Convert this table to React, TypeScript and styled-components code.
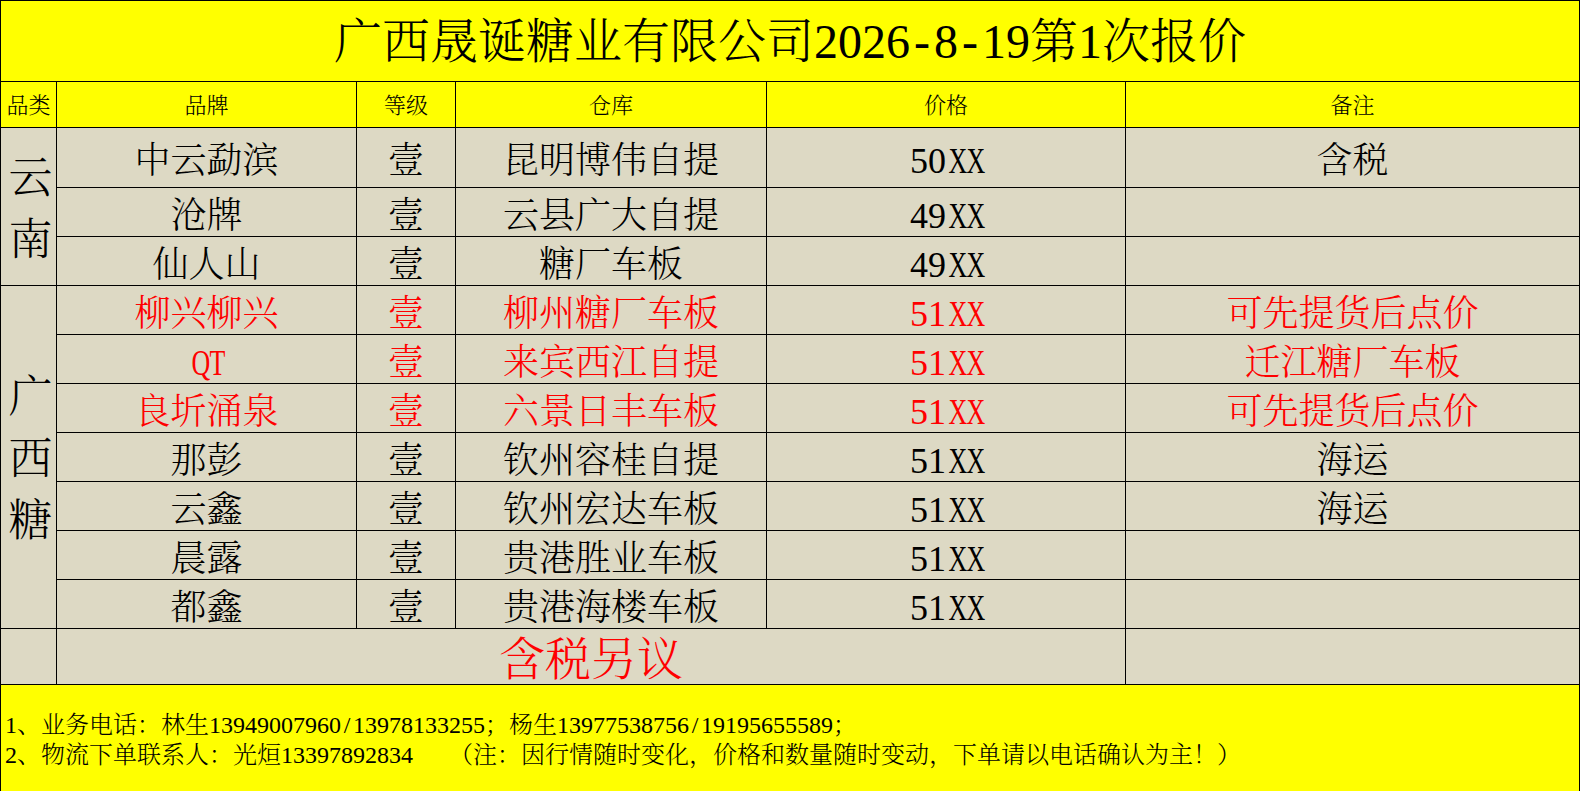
import React from "react";
import styled, { createGlobalStyle } from "styled-components";

const GlobalStyle = createGlobalStyle`
  html, body {
    margin: 0;
    padding: 0;
    background: #fff;
  }
  body {
    font-family: "Liberation Serif", "Noto Serif CJK SC", "Noto Sans CJK SC", serif;
    font-weight: 300;
  }
`;

const Sheet = styled.div`
  display: grid;
  width: 1580px;
  height: 791px;
  box-sizing: border-box;
  grid-template-columns: 55px 299px 98px 310px 358px 453px;
  grid-template-rows: 80px 45px 59px repeat(9, 48px) 55px 106px;
  gap: 1px;
  padding: 1px 1px 0;
  background: #000;
`;

const TitleBar = styled.div`
  grid-column: 1 / -1;
  display: flex;
  align-items: center;
  justify-content: center;
  padding-top: 2px;
  background: #ffff00;
  font-size: 48px;
  line-height: 1.2;
  color: #000;
  white-space: nowrap;
`;

const HeadCell = styled.div`
  display: flex;
  align-items: center;
  justify-content: center;
  padding-top: 4px;
  background: #ffff00;
  font-size: 22px;
  line-height: 1.2;
  color: #000;
`;

const Category = styled.div<{ $rows: number }>`
  grid-column: 1;
  grid-row: span ${(p) => p.$rows};
  display: flex;
  flex-direction: column;
  align-items: center;
  justify-content: center;
  padding-top: 6px;
  padding-left: 4px;
  background: #ddd9c4;
  font-size: 44px;
  line-height: 62px;
`;

const BodyCell = styled.div<{ $red?: boolean }>`
  display: flex;
  align-items: center;
  justify-content: center;
  padding-top: 9px;
  background: #ddd9c4;
  color: ${(p) => (p.$red ? "#ff0000" : "#000")};
  font-size: 36px;
  line-height: 1.2;
  white-space: nowrap;
`;

const TaxNote = styled(BodyCell)`
  grid-column: span 4;
  font-size: 46px;
  padding-top: 7px;
`;

const Footer = styled.div`
  grid-column: 1 / -1;
  display: flex;
  flex-direction: column;
  justify-content: center;
  padding: 4px 0 0 4px;
  background: #ffff00;
  font-size: 24px;
  line-height: 30px;
  color: #000;
  white-space: nowrap;
`;

const Gap = styled.span`
  display: inline-block;
  width: 36px;
`;

// half-width cell for latin capitals and slashes, as in the sheet's font
const Half = styled.span<{ $scale?: number }>`
  display: inline-block;
  width: 0.5em;
  text-align: center;
  transform: scaleX(${(p) => p.$scale ?? 1});
`;

type Row = {
  brand: string;
  grade: string;
  store: string;
  price: string;
  note: string;
  red?: boolean;
};

const yunnan: Row[] = [
  { brand: "中云勐滨", grade: "壹", store: "昆明博伟自提", price: "50XX", note: "含税" },
  { brand: "沧牌", grade: "壹", store: "云县广大自提", price: "49XX", note: "" },
  { brand: "仙人山", grade: "壹", store: "糖厂车板", price: "49XX", note: "" },
];

const guangxi: Row[] = [
  { brand: "柳兴柳兴", grade: "壹", store: "柳州糖厂车板", price: "51XX", note: "可先提货后点价", red: true },
  { brand: "QT", grade: "壹", store: "来宾西江自提", price: "51XX", note: "迁江糖厂车板", red: true },
  { brand: "良圻涌泉", grade: "壹", store: "六景日丰车板", price: "51XX", note: "可先提货后点价", red: true },
  { brand: "那彭", grade: "壹", store: "钦州容桂自提", price: "51XX", note: "海运" },
  { brand: "云鑫", grade: "壹", store: "钦州宏达车板", price: "51XX", note: "海运" },
  { brand: "晨露", grade: "壹", store: "贵港胜业车板", price: "51XX", note: "" },
  { brand: "都鑫", grade: "壹", store: "贵港海楼车板", price: "51XX", note: "" },
];

const headers = ["品类", "品牌", "等级", "仓库", "价格", "备注"];

const narrow = (text: string) =>
  text.split("").map((ch, i) =>
    /[A-Z]/.test(ch) ? (
      <Half key={i} $scale={0.72}>
        {ch}
      </Half>
    ) : ch === "/" || ch === "-" ? (
      <Half key={i}>{ch}</Half>
    ) : (
      ch
    )
  );

const renderRow = (row: Row, i: number) => (
  <React.Fragment key={row.brand + i}>
    <BodyCell $red={row.red}>{narrow(row.brand)}</BodyCell>
    <BodyCell $red={row.red}>{row.grade}</BodyCell>
    <BodyCell $red={row.red}>{row.store}</BodyCell>
    <BodyCell $red={row.red}>{narrow(row.price)}</BodyCell>
    <BodyCell $red={row.red}>{row.note}</BodyCell>
  </React.Fragment>
);

const CategoryLabel = ({ text, rows }: { text: string; rows: number }) => (
  <Category $rows={rows}>
    {text.split("").map((ch, i) => (
      <span key={i}>{ch}</span>
    ))}
  </Category>
);

const App = () => {
  return (
    <>
      <GlobalStyle />
      <Sheet>
        <TitleBar>{narrow("广西晟诞糖业有限公司2026-8-19第1次报价")}</TitleBar>
        {headers.map((h) => (
          <HeadCell key={h}>{h}</HeadCell>
        ))}
        <CategoryLabel text="云南" rows={yunnan.length} />
        {yunnan.map(renderRow)}
        <CategoryLabel text="广西糖" rows={guangxi.length} />
        {guangxi.map(renderRow)}
        <Category $rows={1} />
        <TaxNote $red>含税另议</TaxNote>
        <BodyCell />
        <Footer>
          <div>{narrow("1、业务电话：林生13949007960/13978133255；杨生13977538756/19195655589；")}</div>
          <div>
            2、物流下单联系人：光烜13397892834
            <Gap />
            （注：因行情随时变化，价格和数量随时变动，下单请以电话确认为主！）
          </div>
        </Footer>
      </Sheet>
    </>
  );
};

export default App;
